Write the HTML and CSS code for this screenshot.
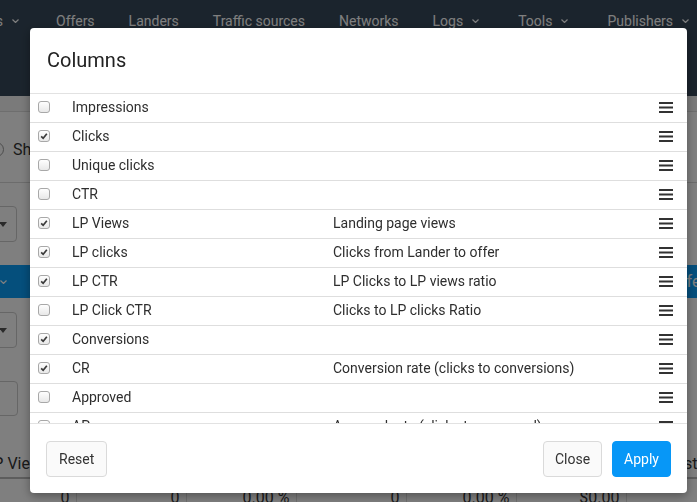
FILE: index.html
```html
<!DOCTYPE html>
<html lang="en">
<head>
<meta charset="utf-8">
<title>Columns</title>
<link rel="stylesheet" href="styles.css">
</head>
<body>
<div class="page">
  <header class="topbar">
    <nav class="nav">
      <div class="nav-item nav-first"><span>Campaigns</span><svg class="chev" viewBox="0 0 7 4" width="7" height="4"><polyline points="0.5,0.5 3.5,3.5 6.5,0.5"/></svg></div>
      <div class="nav-item">Offers</div>
      <div class="nav-item">Landers</div>
      <div class="nav-item">Traffic sources</div>
      <div class="nav-item">Networks</div>
      <div class="nav-item">Logs<svg class="chev" viewBox="0 0 7 4" width="7" height="4"><polyline points="0.5,0.5 3.5,3.5 6.5,0.5"/></svg></div>
      <div class="nav-item">Tools<svg class="chev" viewBox="0 0 7 4" width="7" height="4"><polyline points="0.5,0.5 3.5,3.5 6.5,0.5"/></svg></div>
      <div class="nav-item">Publishers<svg class="chev" viewBox="0 0 7 4" width="7" height="4"><polyline points="0.5,0.5 3.5,3.5 6.5,0.5"/></svg></div>
    </nav>
  </header>
  <div class="subbar"></div>
  <div class="toolbar"><span class="radio"></span><span class="toolbar-label">Show archived</span></div>
  <div class="filters"><div class="select"><span class="caret"></span></div></div>
  <div class="tabbar">
    <div class="tab-first"><span>Campaigns</span><svg class="chev" viewBox="0 0 7 4" width="7" height="4"><polyline points="0.5,0.5 3.5,3.5 6.5,0.5"/></svg></div>
    <div class="tab-spacer"></div>
    <div class="tab-last">Offers</div>
  </div>
  <div class="filters2">
    <div class="select"><span class="caret"></span></div>
    <div class="box"></div>
  </div>
  <table class="grid">
    <thead>
      <tr><th>LP Views</th><th>LP clicks</th><th>LP CTR</th><th>Conversions</th><th>CR</th><th>Revenue</th><th>Cost</th><th>Profit</th></tr>
    </thead>
    <tbody>
      <tr><td>0</td><td>0</td><td>0.00 %</td><td>0</td><td>0.00 %</td><td>$0.00</td><td>0</td><td>$0.00</td></tr>
    </tbody>
  </table>
</div>

<div class="overlay">
  <div class="modal">
    <div class="modal-header"><h2 class="modal-title">Columns</h2></div>
    <div class="modal-body">
      <div class="col-row"><span class="cb"></span><span class="col-name">Impressions</span><span class="col-desc"></span><svg class="drag" viewBox="0 0 14 11" width="14" height="11"><rect y="0" width="14" height="2"/><rect y="4.5" width="14" height="2"/><rect y="9" width="14" height="2"/></svg></div>
      <div class="col-row"><span class="cb on"><svg viewBox="0 0 12 12"><polyline points="2.6,6.4 5,8.8 9.4,3.2"/></svg></span><span class="col-name">Clicks</span><span class="col-desc"></span><svg class="drag" viewBox="0 0 14 11" width="14" height="11"><rect y="0" width="14" height="2"/><rect y="4.5" width="14" height="2"/><rect y="9" width="14" height="2"/></svg></div>
      <div class="col-row"><span class="cb"></span><span class="col-name">Unique clicks</span><span class="col-desc"></span><svg class="drag" viewBox="0 0 14 11" width="14" height="11"><rect y="0" width="14" height="2"/><rect y="4.5" width="14" height="2"/><rect y="9" width="14" height="2"/></svg></div>
      <div class="col-row"><span class="cb"></span><span class="col-name">CTR</span><span class="col-desc"></span><svg class="drag" viewBox="0 0 14 11" width="14" height="11"><rect y="0" width="14" height="2"/><rect y="4.5" width="14" height="2"/><rect y="9" width="14" height="2"/></svg></div>
      <div class="col-row"><span class="cb on"><svg viewBox="0 0 12 12"><polyline points="2.6,6.4 5,8.8 9.4,3.2"/></svg></span><span class="col-name">LP Views</span><span class="col-desc">Landing page views</span><svg class="drag" viewBox="0 0 14 11" width="14" height="11"><rect y="0" width="14" height="2"/><rect y="4.5" width="14" height="2"/><rect y="9" width="14" height="2"/></svg></div>
      <div class="col-row"><span class="cb on"><svg viewBox="0 0 12 12"><polyline points="2.6,6.4 5,8.8 9.4,3.2"/></svg></span><span class="col-name">LP clicks</span><span class="col-desc">Clicks from Lander to offer</span><svg class="drag" viewBox="0 0 14 11" width="14" height="11"><rect y="0" width="14" height="2"/><rect y="4.5" width="14" height="2"/><rect y="9" width="14" height="2"/></svg></div>
      <div class="col-row"><span class="cb on"><svg viewBox="0 0 12 12"><polyline points="2.6,6.4 5,8.8 9.4,3.2"/></svg></span><span class="col-name">LP CTR</span><span class="col-desc">LP Clicks to LP views ratio</span><svg class="drag" viewBox="0 0 14 11" width="14" height="11"><rect y="0" width="14" height="2"/><rect y="4.5" width="14" height="2"/><rect y="9" width="14" height="2"/></svg></div>
      <div class="col-row"><span class="cb"></span><span class="col-name">LP Click CTR</span><span class="col-desc">Clicks to LP clicks Ratio</span><svg class="drag" viewBox="0 0 14 11" width="14" height="11"><rect y="0" width="14" height="2"/><rect y="4.5" width="14" height="2"/><rect y="9" width="14" height="2"/></svg></div>
      <div class="col-row"><span class="cb on"><svg viewBox="0 0 12 12"><polyline points="2.6,6.4 5,8.8 9.4,3.2"/></svg></span><span class="col-name">Conversions</span><span class="col-desc"></span><svg class="drag" viewBox="0 0 14 11" width="14" height="11"><rect y="0" width="14" height="2"/><rect y="4.5" width="14" height="2"/><rect y="9" width="14" height="2"/></svg></div>
      <div class="col-row"><span class="cb on"><svg viewBox="0 0 12 12"><polyline points="2.6,6.4 5,8.8 9.4,3.2"/></svg></span><span class="col-name">CR</span><span class="col-desc">Conversion rate (clicks to conversions)</span><svg class="drag" viewBox="0 0 14 11" width="14" height="11"><rect y="0" width="14" height="2"/><rect y="4.5" width="14" height="2"/><rect y="9" width="14" height="2"/></svg></div>
      <div class="col-row"><span class="cb"></span><span class="col-name">Approved</span><span class="col-desc"></span><svg class="drag" viewBox="0 0 14 11" width="14" height="11"><rect y="0" width="14" height="2"/><rect y="4.5" width="14" height="2"/><rect y="9" width="14" height="2"/></svg></div>
      <div class="col-row"><span class="cb"></span><span class="col-name">AP</span><span class="col-desc">Approval rate (clicks to approved)</span><svg class="drag" viewBox="0 0 14 11" width="14" height="11"><rect y="0" width="14" height="2"/><rect y="4.5" width="14" height="2"/><rect y="9" width="14" height="2"/></svg></div>
      <div class="col-row"><span class="cb on"><svg viewBox="0 0 12 12"><polyline points="2.6,6.4 5,8.8 9.4,3.2"/></svg></span><span class="col-name">Revenue</span><span class="col-desc"></span><svg class="drag" viewBox="0 0 14 11" width="14" height="11"><rect y="0" width="14" height="2"/><rect y="4.5" width="14" height="2"/><rect y="9" width="14" height="2"/></svg></div>
      <div class="col-row"><span class="cb on"><svg viewBox="0 0 12 12"><polyline points="2.6,6.4 5,8.8 9.4,3.2"/></svg></span><span class="col-name">Cost</span><span class="col-desc"></span><svg class="drag" viewBox="0 0 14 11" width="14" height="11"><rect y="0" width="14" height="2"/><rect y="4.5" width="14" height="2"/><rect y="9" width="14" height="2"/></svg></div>
    </div>
    <div class="modal-footer">
      <button class="btn">Reset</button>
      <div class="footer-right">
        <button class="btn btn-slim">Close</button>
        <button class="btn btn-slim btn-primary">Apply</button>
      </div>
    </div>
  </div>
</div>
</body>
</html>
```

FILE: styles.css
```css
html, body {
  margin: 0;
  padding: 0;
}
body {
  width: 697px;
  height: 502px;
  overflow: hidden;
  position: relative;
  font-family: Roboto, "Liberation Sans", Arial, sans-serif;
  font-size: 14px;
  color: #333;
  background: #fff;
}
.page {
  width: 697px;
  overflow: hidden;
}

/* top navigation */
.topbar {
  height: 96px;
  background: #37495a;
}
.nav {
  display: flex;
  height: 41px;
  align-items: center;
  white-space: nowrap;
  color: #fff;
}
.nav-item {
  display: flex;
  align-items: center;
  flex-shrink: 0;
  padding: 0 17px;
}
.chev {
  flex-shrink: 0;
  margin-left: 8.5px;
  margin-right: 5.5px;
  fill: none;
  stroke: currentColor;
  stroke-width: 1.2;
}
.nav-first {
  width: 39px;
  min-width: 0;
  box-sizing: border-box;
  padding: 0 15px 0 0;
  justify-content: flex-end;
}
.nav-first span {
  flex-shrink: 0;
}

.subbar {
  height: 15px;
  background: #f4f4f4;
  border-bottom: 1px solid #dcdcdc;
}
.toolbar {
  height: 71px;
  display: flex;
  align-items: center;
  padding-top: 4px;
  box-sizing: border-box;
  border-bottom: 1px solid #d8d8d8;
  font-size: 16px;
  white-space: nowrap;
}
.radio {
  width: 13px;
  height: 13px;
  border: 1px solid #999;
  border-radius: 50%;
  margin-left: -11px;
  flex-shrink: 0;
}
.toolbar-label {
  margin-left: 9px;
}
.filters {
  height: 82px;
  padding-top: 23px;
  box-sizing: border-box;
}
.select {
  width: 57px;
  height: 36px;
  margin-left: -40px;
  box-sizing: border-box;
  border: 1px solid #ccc;
  border-radius: 4px;
  display: flex;
  align-items: center;
  justify-content: flex-end;
  padding-right: 9px;
}
.caret {
  width: 0;
  height: 0;
  border-left: 4px solid transparent;
  border-right: 4px solid transparent;
  border-top: 5px solid #555;
}
.tabbar {
  height: 33px;
  background: #0a9ef8;
  color: #fff;
  display: flex;
  align-items: center;
  white-space: nowrap;
}
.tab-first {
  width: 7px;
  min-width: 0;
  flex-shrink: 0;
  display: flex;
  align-items: center;
  justify-content: flex-end;
}
.tab-first span {
  flex-shrink: 0;
}
.tab-first .chev {
  margin: 0;
}
.tab-spacer {
  flex: 1;
}
.tab-last {
  width: 27px;
  min-width: 0;
  flex-shrink: 0;
  font-size: 16px;
}
.filters2 {
  height: 146px;
  padding-top: 14px;
  box-sizing: border-box;
  display: flex;
  flex-direction: column;
  gap: 33px;
}
.box {
  width: 58px;
  height: 35px;
  margin-left: -40px;
  box-sizing: border-box;
  border: 1px solid #ccc;
  border-radius: 4px;
}
.grid {
  margin-left: -34px;
  border-collapse: collapse;
  table-layout: fixed;
  width: 880px;
  white-space: nowrap;
}
.grid th {
  width: 110px;
  height: 34px;
  font-weight: 400;
  font-size: 16px;
  text-align: center;
  border-bottom: 2px solid #bbb;
  padding: 6px 0 0 0;
  box-sizing: border-box;
}
.grid th:first-child {
  text-indent: -7px;
}
.grid td {
  height: 30px;
  padding: 3px 6px 0 0;
  text-align: right;
  font-size: 16px;
  border-right: 1px solid #ddd;
}

/* modal */
.overlay {
  position: fixed;
  inset: 0;
  background: rgba(0, 0, 0, 0.5);
}
.modal {
  position: absolute;
  top: 28px;
  left: 30px;
  width: 657px;
  height: 465px;
  background: #fff;
  border-radius: 4px;
  box-shadow: 0 3px 10px rgba(0, 0, 0, 0.35);
  display: flex;
  flex-direction: column;
  overflow: hidden;
}
.modal-header {
  height: 66px;
  flex-shrink: 0;
  box-sizing: border-box;
  border-bottom: 1px solid #e2e2e2;
  display: flex;
  align-items: center;
  padding: 0 17px 2px;
}
.modal-title {
  margin: 0;
  font-size: 20px;
  font-weight: 400;
  color: #222;
  line-height: 24px;
}
.modal-body {
  height: 329px;
  flex-shrink: 0;
  overflow-y: auto;
  scrollbar-width: none;
}
.col-row {
  display: grid;
  grid-template-columns: 34px 261px 1fr 14px;
  align-items: center;
  height: 29px;
  box-sizing: border-box;
  padding: 0 14px 2px 8px;
  border-bottom: 1px solid #dedede;
  color: #2e2e2e;
}
.cb {
  width: 12px;
  height: 12px;
  box-sizing: border-box;
  border: 1px solid #a8a8a8;
  border-radius: 3px;
  background: linear-gradient(#fefefe, #e8e8e8);
  display: flex;
}
.cb svg {
  width: 10px;
  height: 10px;
  fill: none;
  stroke: #3a3a3a;
  stroke-width: 2;
}
.col-name, .col-desc {
  white-space: nowrap;
  line-height: 16px;
}
.drag {
  fill: #333;
  display: block;
}
.modal-footer {
  flex: 1;
  border-top: 1px solid #e2e2e2;
  display: flex;
  justify-content: space-between;
  align-items: flex-start;
  padding: 17px 16px 0 16px;
}
.footer-right {
  display: flex;
  gap: 10px;
}
.btn {
  height: 36px;
  padding: 0 12px;
  font-family: inherit;
  font-size: 14px;
  color: #333;
  background: #fafafa;
  border: 1px solid #dadada;
  border-radius: 4px;
}
.btn-slim {
  padding: 0 11px;
}
.btn-primary {
  background: #0797f7;
  border-color: #0797f7;
  color: #fff;
}
```
